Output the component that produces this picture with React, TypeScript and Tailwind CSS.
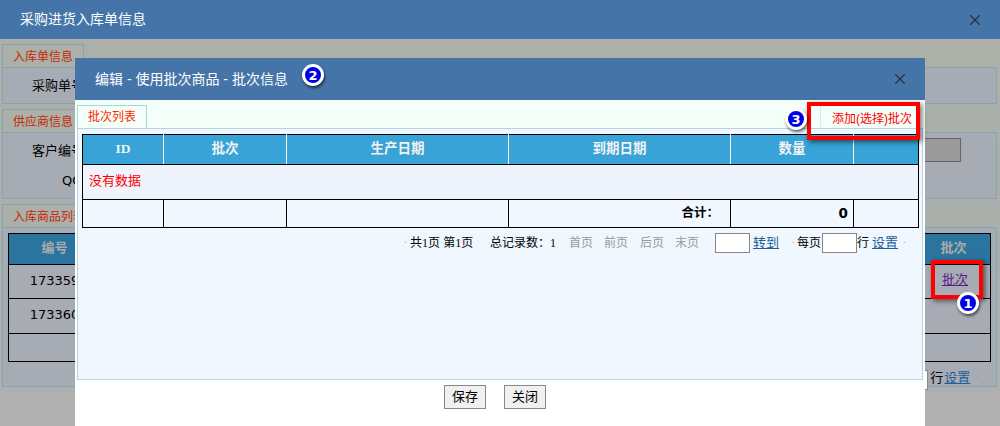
import { X } from "lucide-react";
import type { ReactNode } from "react";

const cjk = "font-['Liberation_Sans','Noto_Sans_CJK_SC',sans-serif]";

function Section({ title, tabWidth, height, children }: { title: string; tabWidth: string; height: string; children?: ReactNode }) {
  return (
    <div className="mx-[2px] w-[995px]">
      <div className={`${tabWidth} h-[23px] border border-b-0 border-[#85a5ad] pl-[10px] pt-[4px] text-[12px] leading-[16px] text-[#c62a05]`}>
        {title}
      </div>
      <div className={`${height} border border-[#85a5ad] bg-[#a7abb3]`}>{children}</div>
    </div>
  );
}

function Marker({ n, className }: { n: number; className: string }) {
  return (
    <div className={`absolute flex h-[22px] w-[22px] items-center justify-center rounded-full border-[3px] border-white bg-[#0000e6] text-[13px] font-bold leading-none text-white shadow-[1px_2px_3px_rgba(0,0,0,0.6)] font-['DejaVu_Sans',sans-serif] ${className}`}>
      {n}
    </div>
  );
}

function Pager() {
  return (
    <div className="flex h-[20px] items-center text-[12px] text-black">
      <span className="ml-[322px] w-[6px] text-[8px] text-[#a07030]">·</span>
      <span className="w-[78px]">共<span className="font-['Liberation_Serif',serif]">1</span>页 第<span className="font-['Liberation_Serif',serif]">1</span>页</span>
      <span className="w-[81px] pl-[2px]">总记录数：<span className="font-['Liberation_Serif',serif]">1</span></span>
      <span className="w-[35px] text-[#999]">首页</span>
      <span className="w-[36px] text-[#999]">前页</span>
      <span className="w-[35px] text-[#999]">后页</span>
      <span className="w-[40px] text-[#999]">末页</span>
      <span className="h-[20px] w-[35px] border border-[#888] bg-white" />
      <a className="ml-[3px] w-[39px] text-[13px] text-[#1f5f96] underline">转到</a>
      <span className="w-[5px] text-[8px] text-[#a07030]">·</span>
      <span className="w-[25px]">每页</span>
      <span className="h-[20px] w-[35px] border border-[#888] bg-white" />
      <span className="w-[15px]">行</span>
      <a className="w-[31px] text-[13px] text-[#1f5f96] underline">设置</a>
      <span className="text-[8px] text-[#a07030]">·</span>
    </div>
  );
}

export default function App() {
  return (
    <div className={`relative h-[426px] w-[1000px] overflow-hidden bg-[#b0b0b0] ${cjk}`}>
      {/* page behind the dialog */}
      <div className="flex h-[39px] items-center justify-between bg-[#4575a8] pl-[20px] pr-[16px] text-[14px] text-white">
        <span>采购进货入库单信息</span>
        <X size={18} strokeWidth={1.5} className="text-[#24303f]" />
      </div>
      <div className="flex h-[349px] flex-col bg-gradient-to-b from-[#acb0a8] to-[#abafaf] pt-[5px]">
        <Section title="入库单信息" tabWidth="w-[82px]" height="h-[37px]">
          <div className="pl-[29px] pt-[8px] text-[13px] text-black">采购单号</div>
        </Section>
        <div className="mt-[5px]">
          <Section title="供应商信息" tabWidth="w-[82px]" height="h-[67px]">
            <div className="flex items-start justify-between pl-[29px] pr-[35px] pt-[5px] text-[13px] text-black">
              <div>
                <div className="pt-[3px]">客户编号</div>
                <div className="ml-[30px] mt-[10px] font-['DejaVu_Sans',sans-serif]">QQ</div>
              </div>
              <div className="h-[24px] w-[40px] border border-[#666] bg-[#9a9a9a]" />
            </div>
          </Section>
        </div>
        <div className="mt-[5px]">
          <Section title="入库商品列表" tabWidth="w-[90px]" height="h-[160px]">
            <table className="ml-[5px] mt-[5px] w-[983px] table-fixed border-collapse text-[13px] text-black">
              <colgroup>
                <col className="w-[92px]" />
                <col />
                <col className="w-[66px]" />
              </colgroup>
              <tbody>
                <tr className="h-[31px] bg-[#2a749f] font-bold text-[#aaa]">
                  <td className="border border-black pb-[3px] text-center">编号</td>
                  <td className="border border-black" />
                  <td className="border border-black pb-[3px] pr-[8px] text-center">批次</td>
                </tr>
                <tr className="h-[34px]">
                  <td className="border border-black pb-[2px] text-center font-['DejaVu_Sans',sans-serif]">173359</td>
                  <td className="border border-black" />
                  <td className="border border-black pb-[4px] pr-[5px] text-center">
                    <a className="text-[#551a8b] underline">批次</a>
                  </td>
                </tr>
                <tr className="h-[35px]">
                  <td className="border border-black pb-[2px] text-center font-['DejaVu_Sans',sans-serif]">173360</td>
                  <td className="border border-black" />
                  <td className="border border-black" />
                </tr>
                <tr className="h-[28px]">
                  <td className="border border-black" />
                  <td className="border border-black" />
                  <td className="border border-black" />
                </tr>
              </tbody>
            </table>
            <div className="mt-[8px] flex justify-end pr-[18px] text-[13px] leading-[16px] text-black">
              <span className="h-[20px] w-[5px] border border-[#888] bg-white" />
              <span className="ml-[2px] w-[14px]">行</span>
              <a className="w-[31px] text-[#1f5f96] underline">设置</a>
              <span className="text-[8px] text-[#a07030]">·</span>
            </div>
          </Section>
        </div>
      </div>

      {/* dialog */}
      <div className="absolute left-[75px] top-[58px] flex h-[368px] w-[850px] flex-col bg-white">
        <div className="flex h-[42px] shrink-0 items-center justify-between bg-[#4575a8] pl-[20px] pr-[16px] text-[14px] text-white">
          <span>编辑 - 使用批次商品 - 批次信息</span>
          <X size={18} strokeWidth={1.5} className="text-[#24303f]" />
        </div>
        <div className="flex h-[28px] shrink-0 items-end justify-between bg-[#f5fff9] pl-[2px] pr-[13px]">
          <div className="flex h-[23px] w-[70px] items-center justify-center border-[1px] border-b-0 border-[#a8d8d8] text-[12px] text-[#ff2a00]">
            批次列表
          </div>
          <div className="flex h-[25px] items-center text-[12px] text-[#ff0000]">
            <span className="mr-[11px] h-[22px] w-px bg-[#dce6e6]" />
            <span className="mt-[6px]">添加(选择)批次</span>
          </div>
        </div>
        <div className="ml-[2px] h-[252px] w-[846px] shrink-0 border border-[#b3d4e0] bg-[#f0f7ff] px-[4px] pt-[5px]">
          <table className="w-[836px] table-fixed border-collapse text-[13.5px]">
            <colgroup>
              <col className="w-[81px]" />
              <col className="w-[123px]" />
              <col className="w-[222px]" />
              <col className="w-[222px]" />
              <col className="w-[123px]" />
              <col className="w-[65px]" />
            </colgroup>
            <tbody>
              <tr className="h-[30px] bg-[#38a3d6] text-center font-bold text-[#f2f2f2]">
                <td className="border border-black border-r-white pb-px font-['Liberation_Serif',serif]">ID</td>
                <td className="border border-black border-x-white pb-px">批次</td>
                <td className="border border-black border-x-white pb-px">生产日期</td>
                <td className="border border-black border-x-white pb-px">到期日期</td>
                <td className="border border-black border-x-white pb-px">数量</td>
                <td className="border border-black border-l-white" />
              </tr>
              <tr className="h-[35px] bg-[#eef3fc]">
                <td colSpan={6} className="border border-black pb-[2px] pl-[6px] text-[13px] text-[#ff0000]">
                  没有数据
                </td>
              </tr>
              <tr className="h-[28px] font-bold text-black">
                <td className="border border-black" />
                <td className="border border-black" />
                <td className="border border-black" />
                <td className="border border-black pr-[11px] text-right text-[12.5px]">合计：</td>
                <td className="border border-black pr-[5px] text-right font-['DejaVu_Sans',sans-serif]">0</td>
                <td className="border border-black" />
              </tr>
            </tbody>
          </table>
          <div className="mt-[5px]">
            <Pager />
          </div>
        </div>
        <div className="flex justify-center gap-[18px] pr-[10px] pt-[5px]">
          <button className="h-[24px] w-[42px] border border-[#888] bg-[#f0f0f0] text-[13px] text-black">保存</button>
          <button className="h-[24px] w-[42px] border border-[#888] bg-[#f0f0f0] text-[13px] text-black">关闭</button>
        </div>
      </div>

      {/* annotations */}
      <div className="absolute left-[807px] top-[102px] h-[38px] w-[113px] border-[4px] border-[#ff0000] shadow-[2px_2px_5px_rgba(0,0,0,0.55)]" />
      <div className="absolute left-[931px] top-[260px] h-[39px] w-[52px] border-[4px] border-[#ff0000] shadow-[2px_2px_5px_rgba(0,0,0,0.55)]" />
      <Marker n={1} className="left-[957px] top-[292px]" />
      <Marker n={2} className="left-[302px] top-[64px]" />
      <Marker n={3} className="left-[785px] top-[108px]" />
    </div>
  );
}
